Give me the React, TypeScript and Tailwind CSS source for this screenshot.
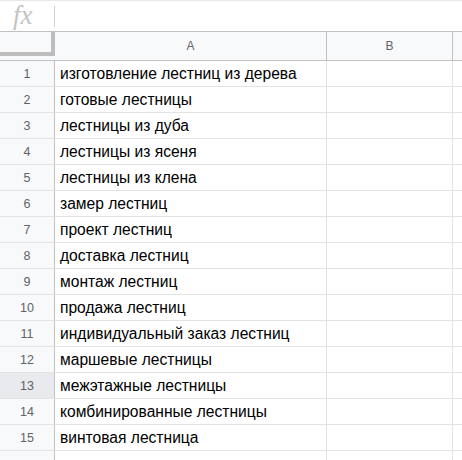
const rows = [
  'изготовление лестниц из дерева',
  'готовые лестницы',
  'лестницы из дуба',
  'лестницы из ясеня',
  'лестницы из клена',
  'замер лестниц',
  'проект лестниц',
  'доставка лестниц',
  'монтаж лестниц',
  'продажа лестниц',
  'индивидуальный заказ лестниц',
  'маршевые лестницы',
  'межэтажные лестницы',
  'комбинированные лестницы',
  'винтовая лестница',
  '',
];

export default function App() {
  return (
    <div className="h-[460px] w-[462px] overflow-hidden bg-white font-['Liberation_Sans',Arial,sans-serif]">
      {/* formula bar */}
      <div className="flex h-[31px] items-center border-t border-[#e8e8e8]">
        <div className="w-[54px] pl-[13px] pb-[2px] font-['Liberation_Serif',serif] text-[27px] italic leading-none text-[#c4c4c4]">fx</div>
        <div className="h-[21px] w-px bg-[#d0d0d0]" />
      </div>
      {/* column headers */}
      <div className="flex h-[30px] border-y border-[#c0c0c0] bg-[#f8f9fa] text-[12px] text-[#5f6368]">
        <div className="h-[24px] w-[55px] shrink-0 border-r-4 border-b-4 border-[#bdbdbd]" />
        <div className="flex w-[272px] shrink-0 items-center justify-center border-r border-[#c0c0c0]">A</div>
        <div className="flex w-[126px] shrink-0 items-center justify-center border-r border-[#c0c0c0]">B</div>
        <div className="flex-1" />
      </div>
      {rows.map((text, i) => (
        <div key={i} className="flex h-[26px] border-b border-[#e2e3e3]">
          <div
            className={`flex w-[55px] shrink-0 items-center justify-center border-r border-[#c0c0c0] pt-px text-[12.5px] text-[#5f6368] ${i === 12 ? 'bg-[#e8eaed]' : 'bg-[#f8f9fa]'}`}
          >
            {text ? i + 1 : ''}
          </div>
          <div className="flex w-[272px] shrink-0 items-center border-r border-[#e2e3e3] pl-[5px] pt-px text-[15.6px] text-black">{text}</div>
          <div className="w-[126px] shrink-0 border-r border-[#e2e3e3]" />
          <div className="flex-1" />
        </div>
      ))}
    </div>
  );
}
